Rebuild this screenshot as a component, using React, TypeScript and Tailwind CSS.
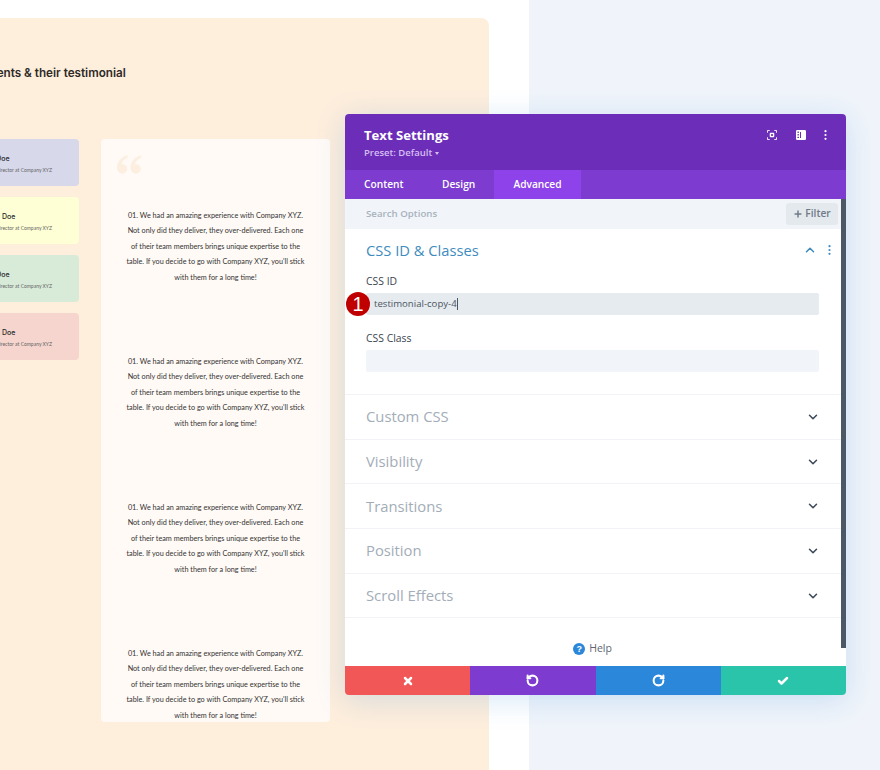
import { X, RotateCcw, RotateCw, Check, ChevronDown, ChevronUp, Plus } from "lucide-react";

const lato = "font-['Lato','Liberation_Sans',sans-serif]";
const open = "font-['Open_Sans','Noto_Sans',sans-serif]";

const people = [
  { bg: "bg-[#d7d8ea]", name: "Jane Doe" },
  { bg: "bg-[#feffd4]", name: "James Doe" },
  { bg: "bg-[#d8ebd9]", name: "Jane Doe" },
  { bg: "bg-[#f5d5cd]", name: "James Doe" },
];

function Quote() {
  return (
    <svg width="26" height="20" viewBox="0 0 26 20" className="block" fill="#fcefe0">
      <path d="M11.5 1.2 C5.5 3 1 7.5 1 13 C1 17 3.2 19.5 6.2 19.5 C9 19.5 11.2 17.5 11.2 14.7 C11.2 12 9.2 10.2 6.8 10.2 C6.3 10.2 5.9 10.3 5.6 10.4 C6 7.5 8.4 4.8 12 3.2 Z" />
      <path d="M25 1.2 C19 3 14.5 7.5 14.5 13 C14.5 17 16.7 19.5 19.7 19.5 C22.5 19.5 24.7 17.5 24.7 14.7 C24.7 12 22.7 10.2 20.3 10.2 C19.8 10.2 19.4 10.3 19.1 10.4 C19.5 7.5 21.9 4.8 25.5 3.2 Z" />
    </svg>
  );
}

function Testimonial() {
  return (
    <p className={`${lato} h-[146px] text-center text-[7.25px] leading-[15.4px] text-[#333] whitespace-nowrap`}>
      01. We had an amazing experience with Company XYZ.<br />
      Not only did they deliver, they over-delivered. Each one<br />
      of their team members brings unique expertise to the<br />
      table. If you decide to go with Company XYZ, you'll stick<br />
      with them for a long time!
    </p>
  );
}

function Section({ title }: { title: string }) {
  return (
    <div className="h-[44.7px] flex items-center justify-between border-b border-[#f1f3f6] pl-[21px] pr-[21px]">
      <span className={`${open} text-[14.8px] leading-[20px] mt-[-1px] text-[#a3adb8]`}>{title}</span>
      <ChevronDown size={14} strokeWidth={2.6} className="text-[#3c4a5a]" />
    </div>
  );
}

export default function App() {
  return (
    <div className="relative w-[880px] h-[770px] overflow-hidden flex bg-[#f0f4fa]">
      <div className="w-[529px] h-full bg-white pt-[18px] shrink-0">
        <div className="w-[489px] h-[800px] bg-[#feeedc] rounded-r-[8px] overflow-hidden">
          <h2 className="font-['Inter','Noto_Sans',sans-serif] font-semibold text-[11.7px] leading-[16px] text-[#2d2a28] whitespace-nowrap ml-[-40px] mt-[47px]">
            Our clients &amp; their testimonial
          </h2>
          <div className="flex mt-[58px]">
            <div className="w-[79px] flex flex-col gap-[11px] shrink-0">
              {people.map((p, i) => (
                <div key={i} className={`${p.bg} h-[47px] rounded-r-[4px] overflow-hidden pt-[14px] whitespace-nowrap`}>
                  <div className="ml-[-22px] font-['Inter','Noto_Sans',sans-serif] font-medium text-[7px] leading-[12px] text-[#2a2a2a]">{p.name}</div>
                  <div className={`ml-[-27px] ${lato} text-[5px] leading-[10px] text-[#666]`}>Managing Director at Company XYZ</div>
                </div>
              ))}
            </div>
            <div className="w-[229px] h-[583px] ml-[22px] bg-[#fffaf6] rounded-[4px] overflow-hidden">
              <div className="pl-[15px] pt-[15px] h-[69px]"><Quote /></div>
              <Testimonial />
              <Testimonial />
              <Testimonial />
              <Testimonial />
            </div>
          </div>
        </div>
      </div>

      {/* Settings modal */}
      <div className="absolute left-[345px] top-[114px] w-[501px] h-[581px] rounded-[4px] overflow-hidden bg-white flex flex-col shadow-[0_5px_30px_rgba(43,135,218,0.2)]">
        <div className="h-[56px] shrink-0 bg-[#6c2eb9] flex justify-between pl-[19px] pr-[19px]">
          <div>
            <div className={`${open} font-bold text-[13.1px] leading-[18px] text-white mt-[12px]`}>Text Settings</div>
            <div className={`${open} font-semibold text-[9.5px] leading-[14px] text-[#d5bff2] mt-[2px] flex items-center gap-[3px]`}>
              Preset: Default
              <span className="w-0 h-0 border-x-[2.5px] border-x-transparent border-t-[3px] border-t-[#d5bff2]" />
            </div>
          </div>
          <div className="flex items-center gap-[19px] h-[41px]">
            <svg width="10" height="10" viewBox="0 0 11 11" fill="none" stroke="#fff" strokeWidth="1">
              <path d="M.5 3V.5H3M8 .5h2.5V3M10.5 8v2.5H8M3 10.5H.5V8" />
              <rect x="3" y="3" width="5" height="5" rx="1" fill="#fff" stroke="none" />
              <rect x="4.5" y="4.5" width="2" height="2" fill="#6c2eb9" stroke="none" />
            </svg>
            <svg width="10" height="10" viewBox="0 0 10 10">
              <rect width="10" height="10" rx="1.2" fill="#fff" />
              <rect x="4" y="2" width="1" height="6" fill="#6c2eb9" />
              <rect x="1.4" y="1.6" width="1.6" height="1.2" fill="#6c2eb9" />
              <rect x="1.4" y="4.2" width="1.6" height="1.2" fill="#6c2eb9" />
              <rect x="1.4" y="6.8" width="1.6" height="1.2" fill="#6c2eb9" />
            </svg>
            <svg width="3" height="10" viewBox="0 0 3 10" fill="#fff" className="ml-[-1px]">
              <circle cx="1.5" cy="1.2" r="1.1" /><circle cx="1.5" cy="5" r="1.1" /><circle cx="1.5" cy="8.8" r="1.1" />
            </svg>
          </div>
        </div>

        <div className={`h-[29px] shrink-0 bg-[#7d3bcf] flex ${open} font-semibold text-[10.2px] text-white`}>
          <div className="w-[77px] pl-[19px] flex items-center">Content</div>
          <div className="w-[72px] pl-[20px] flex items-center">Design</div>
          <div className="w-[87px] bg-[#8e42ea] flex items-center justify-center">Advanced</div>
        </div>

        <div className="flex-1 min-h-0 flex flex-col">
          <div className="flex-1 min-h-0 flex">
            <div className="flex-1 min-w-0 flex flex-col">
              <div className="h-[30px] shrink-0 bg-[#f1f5f9] flex items-center justify-between pl-[21px] pr-[3px]">
                <span className={`${open} font-semibold text-[9.7px] text-[#a8b2bd]`}>Search Options</span>
                <div className={`w-[52px] h-[22px] bg-[#e4e9ee] rounded-[3px] flex items-center justify-center gap-[2px] ${open} font-semibold text-[10.2px] text-[#6f7a87]`}>
                  <Plus size={10} strokeWidth={3.5} />Filter
                </div>
              </div>

              <div className="h-[166px] shrink-0 border-b border-[#f1f3f6] pl-[21px] pr-[22px]">
                <div className="flex justify-between items-center h-[44px] mt-[-1px]">
                  <span className={`${open} text-[14.7px] text-[#3e8cbd]`}>CSS ID &amp; Classes</span>
                  <div className="flex items-center gap-[11px] mr-[-12px]">
                    <ChevronUp size={14} strokeWidth={2.6} className="text-[#3e8cbd]" />
                    <svg width="3" height="10" viewBox="0 0 3 10" fill="#3e8cbd">
                      <circle cx="1.5" cy="1.2" r="1.1" /><circle cx="1.5" cy="5" r="1.1" /><circle cx="1.5" cy="8.8" r="1.1" />
                    </svg>
                  </div>
                </div>
                <div className={`${open} font-medium text-[10.4px] leading-[14px] text-[#3b4450] mt-[2px]`}>CSS ID</div>
                <div className={`${open} font-medium h-[22px] mt-[5px] bg-[#e6ebf0] rounded-[2px] pl-[8px] flex items-center text-[9.6px] text-[#4b5662]`}>
                  testimonial-copy-4<span className="w-px h-[12px] bg-[#4b5662]" />
                </div>
                <div className={`${open} font-medium text-[10.4px] leading-[14px] text-[#3b4450] mt-[16px]`}>CSS Class</div>
                <div className="h-[22px] mt-[5px] bg-[#f1f5f9] rounded-[2px]" />
              </div>

              <Section title="Custom CSS" />
              <Section title="Visibility" />
              <Section title="Transitions" />
              <Section title="Position" />
              <Section title="Scroll Effects" />
              <div className="flex-1 flex items-end justify-center pb-[11px] gap-[4px] pr-[1px]">
                <span className="w-[12px] h-[12px] rounded-full bg-[#2b87da] text-white text-[9px] leading-[12px] font-bold text-center font-['Liberation_Sans',sans-serif]">?</span>
                <span className={`${open} font-medium text-[10.5px] leading-[14px] text-[#5c6773]`}>Help</span>
              </div>
            </div>
            <div className="w-[5px] shrink-0 flex flex-col bg-white">
              <div className="h-[449px] bg-[#4c5866]" />
            </div>
          </div>
          <div className="h-[29px] shrink-0 flex text-white">
            <div className="flex-1 bg-[#f25757] flex items-center justify-center"><X size={12} strokeWidth={5} /></div>
            <div className="flex-1 bg-[#7d3bcf] flex items-center justify-center"><RotateCcw size={13} strokeWidth={3.8} /></div>
            <div className="flex-1 bg-[#2b87da] flex items-center justify-center"><RotateCw size={13} strokeWidth={3.8} /></div>
            <div className="flex-1 bg-[#29c4a9] flex items-center justify-center"><Check size={12} strokeWidth={5} /></div>
          </div>
        </div>
      </div>

      <div className="absolute left-[346px] top-[292px] w-[24px] h-[24px] rounded-full bg-[#c00000] text-white flex items-center justify-center font-['Liberation_Sans',sans-serif] text-[20px]">1</div>
    </div>
  );
}
